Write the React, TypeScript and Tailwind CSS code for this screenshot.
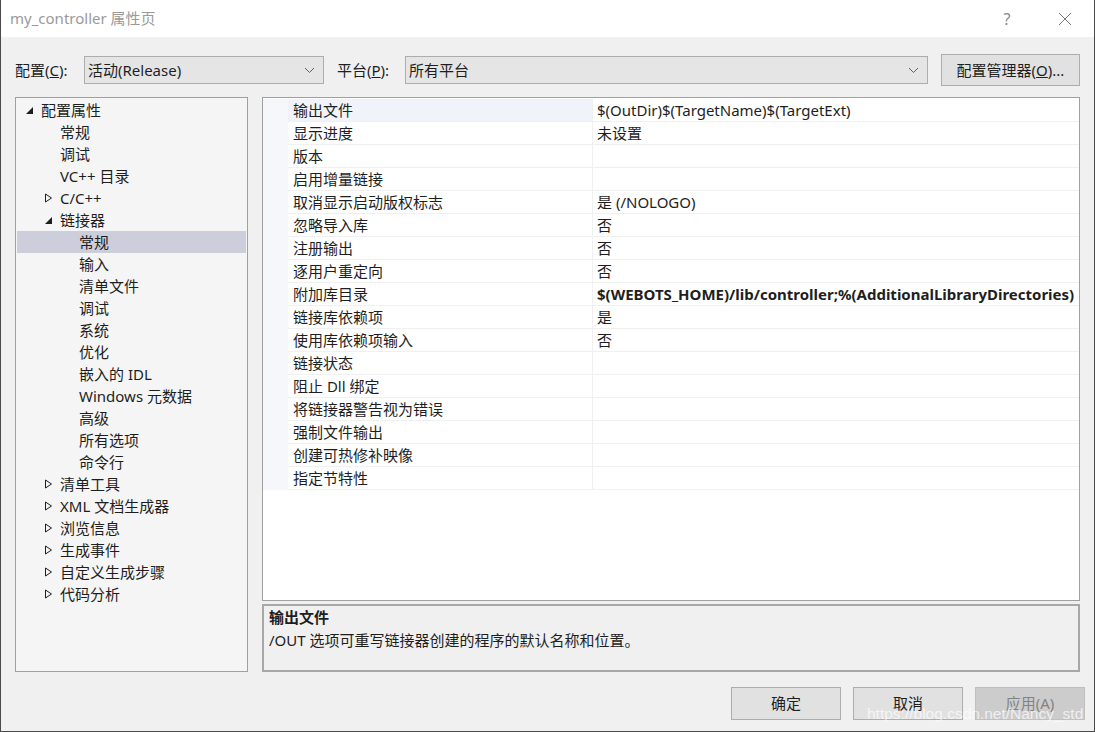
import React from "react";

const FONT = { fontFamily: '"Noto Sans", "Noto Sans CJK SC", sans-serif' };

type TreeItem = { label: string; level: number; arrow?: "open" | "closed"; selected?: boolean };

const tree: TreeItem[] = [
  { label: "配置属性", level: 0, arrow: "open" },
  { label: "常规", level: 1 },
  { label: "调试", level: 1 },
  { label: "VC++ 目录", level: 1 },
  { label: "C/C++", level: 1, arrow: "closed" },
  { label: "链接器", level: 1, arrow: "open" },
  { label: "常规", level: 2, selected: true },
  { label: "输入", level: 2 },
  { label: "清单文件", level: 2 },
  { label: "调试", level: 2 },
  { label: "系统", level: 2 },
  { label: "优化", level: 2 },
  { label: "嵌入的 IDL", level: 2 },
  { label: "Windows 元数据", level: 2 },
  { label: "高级", level: 2 },
  { label: "所有选项", level: 2 },
  { label: "命令行", level: 2 },
  { label: "清单工具", level: 1, arrow: "closed" },
  { label: "XML 文档生成器", level: 1, arrow: "closed" },
  { label: "浏览信息", level: 1, arrow: "closed" },
  { label: "生成事件", level: 1, arrow: "closed" },
  { label: "自定义生成步骤", level: 1, arrow: "closed" },
  { label: "代码分析", level: 1, arrow: "closed" },
];

const props: { name: string; value: string; bold?: boolean }[] = [
  { name: "输出文件", value: "$(OutDir)$(TargetName)$(TargetExt)" },
  { name: "显示进度", value: "未设置" },
  { name: "版本", value: "" },
  { name: "启用增量链接", value: "" },
  { name: "取消显示启动版权标志", value: "是 (/NOLOGO)" },
  { name: "忽略导入库", value: "否" },
  { name: "注册输出", value: "否" },
  { name: "逐用户重定向", value: "否" },
  { name: "附加库目录", value: "$(WEBOTS_HOME)/lib/controller;%(AdditionalLibraryDirectories)", bold: true },
  { name: "链接库依赖项", value: "是" },
  { name: "使用库依赖项输入", value: "否" },
  { name: "链接状态", value: "" },
  { name: "阻止 Dll 绑定", value: "" },
  { name: "将链接器警告视为错误", value: "" },
  { name: "强制文件输出", value: "" },
  { name: "创建可热修补映像", value: "" },
  { name: "指定节特性", value: "" },
];

function Arrow({ kind }: { kind: "open" | "closed" }) {
  if (kind === "open") {
    return (
      <svg width="9" height="9" viewBox="0 0 9 9">
        <polygon points="8,1 8,8 1,8" fill="#1e1e1e" />
      </svg>
    );
  }
  return (
    <svg width="9" height="10" viewBox="0 0 9 10">
      <polygon points="1.5,1 7.5,5 1.5,9" fill="none" stroke="#1e1e1e" strokeWidth="1" />
    </svg>
  );
}

function Chevron() {
  return (
    <svg width="11" height="7" viewBox="0 0 11 7">
      <polyline points="1,1 5.5,5.5 10,1" fill="none" stroke="#606060" strokeWidth="1" />
    </svg>
  );
}

export default function App() {
  return (
    <div
      className="relative w-[1095px] h-[732px] bg-[#f0f0f0] border-x border-b border-[#4a4a4a] flex flex-col text-[15px] text-[#1e1e1e] overflow-hidden"
      style={FONT}
    >
      {/* title bar */}
      <div className="h-[37px] bg-white flex items-center pl-[9px] shrink-0">
        <div className="text-[15px] text-[#9a9a9a] flex-1">my_controller 属性页</div>
        <div className="w-[46px] flex justify-center text-[#8a8a8a] text-[16px] mr-[12px]">?</div>
        <div className="w-[46px] flex justify-center mr-[6px]">
          <svg width="14" height="14" viewBox="0 0 14 14">
            <path d="M1 1 L13 13 M13 1 L1 13" stroke="#777" strokeWidth="1" />
          </svg>
        </div>
      </div>

      {/* config row */}
      <div className="flex items-center pl-[14px] pr-[14px] mt-[17px] h-[32px] shrink-0">
        <div className="w-[69px]">
          配置(<span className="underline">C</span>):
        </div>
        <div className="w-[240px] h-[28px] bg-[#e5e5e5] border border-[#adadad] flex items-center pl-[3px] pr-[8px]">
          <span className="flex-1">活动(Release)</span>
          <Chevron />
        </div>
        <div className="w-[81px] pl-[13px]">
          平台(<span className="underline">P</span>):
        </div>
        <div className="w-[523px] h-[28px] bg-[#e5e5e5] border border-[#adadad] flex items-center pl-[3px] pr-[8px]">
          <span className="flex-1">所有平台</span>
          <Chevron />
        </div>
        <div className="flex-1" />
        <div className="w-[139px] h-[32px] bg-[#e1e1e1] border border-[#adadad] flex items-center justify-center">
          配置管理器(<span className="underline">O</span>)...
        </div>
      </div>

      {/* main */}
      <div className="flex pl-[14px] pr-[14px] mt-[11px] h-[575px] shrink-0">
        {/* tree */}
        <div className="w-[233px] h-full border border-[#a0a0a0] bg-[#f5f5f5] pt-[1px] px-[1px]">
          {tree.map((t, i) => (
            <div
              key={i}
              className={
                "h-[22px] flex items-center " + (t.selected ? "bg-[#cccedb]" : "")
              }
            >
              <div style={{ width: 8 + t.level * 19 }} className="shrink-0" />
              <div className="w-[16px] shrink-0 flex items-center">
                {t.arrow ? <Arrow kind={t.arrow} /> : null}
              </div>
              <span className="whitespace-nowrap">{t.label}</span>
            </div>
          ))}
        </div>

        <div className="w-[14px] shrink-0" />

        {/* right side */}
        <div className="flex-1 flex flex-col">
          <div className="h-[504px] border border-[#a0a0a0] bg-white overflow-hidden">
            <div className="flex flex-col pt-[1px]">
              {props.map((p, i) => (
                <div key={i} className="h-[23px] flex">
                  <div className="w-[25px] shrink-0 bg-[#f5f7fb]" />
                  <div
                    className={
                      "w-[305px] shrink-0 flex items-center pl-[5px] border-b border-[#f0f0f0] border-r " +
                      (i === 0 ? "bg-[#f0f4fa]" : "")
                    }
                  >
                    {p.name}
                  </div>
                  <div
                    className={
                      "flex-1 flex items-center pl-[4px] border-b border-[#f0f0f0] whitespace-nowrap overflow-hidden " +
                      (p.bold ? "font-bold" : "")
                    }
                  >
                    {p.value}
                  </div>
                </div>
              ))}
            </div>
          </div>

          <div className="mt-[3px] h-[68px] border-2 border-[#a8a8a8] bg-[#f0f0f0] px-[5px]">
            <div className="font-bold h-[22px] flex items-center">输出文件</div>
            <div className="h-[24px] flex items-center">/OUT 选项可重写链接器创建的程序的默认名称和位置。</div>
          </div>
        </div>
      </div>

      {/* buttons */}
      <div className="flex justify-end gap-[12px] mt-[15px] pr-[9px]">
        <div className="w-[110px] h-[33px] bg-[#e1e1e1] border border-[#adadad] flex items-center justify-center">
          确定
        </div>
        <div className="w-[110px] h-[33px] bg-[#e1e1e1] border border-[#adadad] flex items-center justify-center">
          取消
        </div>
        <div className="w-[110px] h-[33px] bg-[#cccccc] border border-[#bfbfbf] flex items-center justify-center text-[#838383]">
          应用(A)
        </div>
      </div>

      {/* watermark */}
      <div
        className="absolute left-[866px] top-[702px] text-[15.5px] text-white/70 whitespace-nowrap"
        style={{ fontFamily: '"Liberation Sans", Arial, sans-serif' }}
      >
        https://blog.csdn.net/Nancy_std
      </div>
    </div>
  );
}
